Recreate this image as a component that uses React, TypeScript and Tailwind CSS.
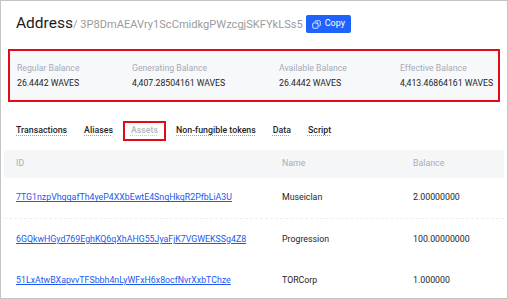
import { Copy } from "lucide-react";

const balances = [
  { label: "Regular Balance", value: "26.4442 WAVES" },
  { label: "Generating Balance", value: "4,407.28504161 WAVES" },
  { label: "Available Balance", value: "26.4442 WAVES" },
  { label: "Effective Balance", value: "4,413.46864161 WAVES" },
];

const tabs = ["Transactions", "Aliases", "Assets", "Non-fungible tokens", "Data", "Script"];

const assets = [
  { id: "7TG1nzpVhqqafTh4yeP4XXbEwtE4SnqHkqR2PfbLiA3U", name: "Museiclan", balance: "2.00000000" },
  { id: "6GQkwHGyd769EghKQ6qXhAHG55JyaFjK7VGWEKSSg4Z8", name: "Progression", balance: "100.00000000" },
  { id: "51LxAtwBXapvvTFSbbh4nLyWFxH6x8ocfNvrXxbTChze", name: "TORCorp", balance: "1.000000" },
];

const App = () => {
  return (
    <div
      className="w-[508px] h-[299px] overflow-hidden border border-[#c4c4c4] bg-white text-[#222]"
      style={{ fontFamily: "Roboto, 'Liberation Sans', sans-serif" }}
    >
      <div className="flex items-center h-[45px] pl-[15px] pt-[1px]">
        <h1 className="text-[15.5px] text-[#1b1b1b] leading-none">Address</h1>
        <span className="text-[11.1px] text-[#9b9b9b] leading-none mt-[1px]">
          / 3P8DmAEAVry1ScCmidkgPWzcgjSKFYkLSs5
        </span>
        <button className="ml-[3px] flex items-center gap-[4px] h-[18px] px-[6px] rounded-[2px] bg-[#1f63ff] text-white text-[9px]">
          <Copy size={9} strokeWidth={2.2} className="-scale-x-100" />
          Copy
        </button>
      </div>

      <div className="mx-[7px] mt-[3px] h-[53px] border-2 border-[#e30b17] bg-[#f7f8fa] grid grid-cols-[115px_147px_121px_1fr] content-center pl-[7px]">
        {balances.map((b) => (
          <div key={b.label} className="flex flex-col gap-[6px] text-[8.7px] leading-none">
            <span className="text-[#a5abb7]">{b.label}</span>
            <span className="text-[#1e1e1e]">{b.value}</span>
          </div>
        ))}
      </div>

      <div className="flex items-center h-[38px] pl-[15px] gap-[17px] mt-[10px]">
        {tabs.map((t) =>
          t === "Assets" ? (
            <span
              key={t}
              className="h-[20px] px-[6px] flex items-center border-2 border-[#e30b17] text-[8.8px] font-medium text-[#b3b7bf] underline decoration-dotted decoration-[#c8ccd2] underline-offset-2 -mx-[7px]"
            >
              {t}
            </span>
          ) : (
            <span
              key={t}
              className="text-[8.8px] font-medium text-[#1f1f1f] underline decoration-dotted decoration-[#9aa0aa] underline-offset-2"
            >
              {t}
            </span>
          )
        )}
      </div>

      <div className="mx-[3px]">
        <div className="grid grid-cols-[266px_131px_1fr] items-center h-[28px] bg-[#f5f6f8] pl-[12px] text-[8.8px] text-[#a8adb7]">
          <span>ID</span>
          <span>Name</span>
          <span>Balance</span>
        </div>
        {assets.map((a, i) => (
          <div
            key={a.id}
            className={`grid grid-cols-[266px_131px_1fr] items-center h-[41px] pl-[12px] text-[8.8px] ${
              i === 0 ? "border-b border-dashed border-[#eceef1]" : ""
            }`}
          >
            <a className="text-[#2158f0] underline underline-offset-1">{a.id}</a>
            <span className="text-[#1e1e1e]">{a.name}</span>
            <span className="text-[#1e1e1e]">{a.balance}</span>
          </div>
        ))}
      </div>
    </div>
  );
};

export default App;
